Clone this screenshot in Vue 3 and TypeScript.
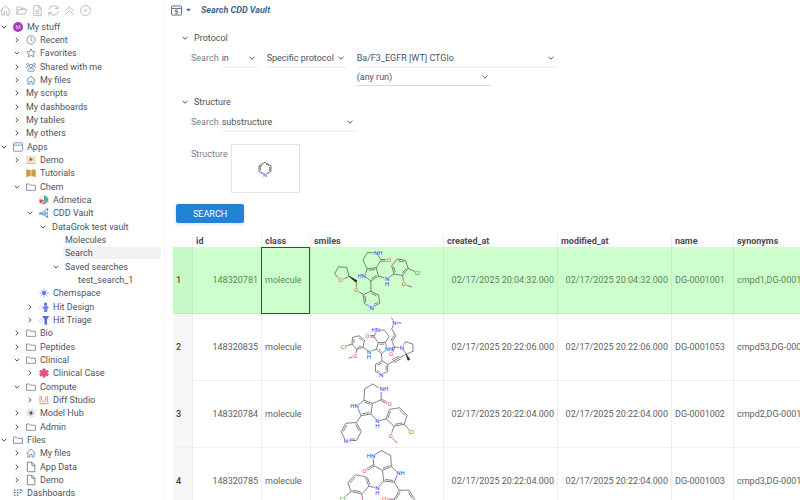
<script setup lang="ts">
import { ref } from 'vue'

type IconName =
  | 'avatar' | 'clock' | 'star' | 'people' | 'home' | 'window' | 'demo' | 'book' | 'folder'
  | 'admetica' | 'vault' | 'space' | 'design' | 'triage' | 'clinical' | 'diff' | 'hub' | 'file' | 'dashboards'

interface TreeNode {
  label: string
  level: number
  icon?: IconName
  state?: 'open' | 'closed'
}

const tree: TreeNode[] = [
  { label: 'My stuff', level: 0, icon: 'avatar', state: 'open' },
  { label: 'Recent', level: 1, icon: 'clock', state: 'closed' },
  { label: 'Favorites', level: 1, icon: 'star', state: 'open' },
  { label: 'Shared with me', level: 1, icon: 'people', state: 'closed' },
  { label: 'My files', level: 1, icon: 'home', state: 'closed' },
  { label: 'My scripts', level: 1, state: 'closed' },
  { label: 'My dashboards', level: 1, state: 'closed' },
  { label: 'My tables', level: 1, state: 'closed' },
  { label: 'My others', level: 1, state: 'closed' },
  { label: 'Apps', level: 0, icon: 'window', state: 'open' },
  { label: 'Demo', level: 1, icon: 'demo', state: 'closed' },
  { label: 'Tutorials', level: 1, icon: 'book' },
  { label: 'Chem', level: 1, icon: 'folder', state: 'open' },
  { label: 'Admetica', level: 2, icon: 'admetica' },
  { label: 'CDD Vault', level: 2, icon: 'vault', state: 'open' },
  { label: 'DataGrok test vault', level: 3, state: 'open' },
  { label: 'Molecules', level: 4 },
  { label: 'Search', level: 4 },
  { label: 'Saved searches', level: 4, state: 'open' },
  { label: 'test_search_1', level: 5 },
  { label: 'Chemspace', level: 2, icon: 'space' },
  { label: 'Hit Design', level: 2, icon: 'design', state: 'closed' },
  { label: 'Hit Triage', level: 2, icon: 'triage', state: 'closed' },
  { label: 'Bio', level: 1, icon: 'folder', state: 'closed' },
  { label: 'Peptides', level: 1, icon: 'folder', state: 'closed' },
  { label: 'Clinical', level: 1, icon: 'folder', state: 'open' },
  { label: 'Clinical Case', level: 2, icon: 'clinical', state: 'closed' },
  { label: 'Compute', level: 1, icon: 'folder', state: 'open' },
  { label: 'Diff Studio', level: 2, icon: 'diff', state: 'closed' },
  { label: 'Model Hub', level: 1, icon: 'hub', state: 'closed' },
  { label: 'Admin', level: 1, icon: 'folder', state: 'closed' },
  { label: 'Files', level: 0, icon: 'folder', state: 'open' },
  { label: 'My files', level: 1, icon: 'home', state: 'closed' },
  { label: 'App Data', level: 1, icon: 'file', state: 'closed' },
  { label: 'Demo', level: 1, icon: 'file', state: 'closed' },
  { label: 'Dashboards', level: 0, icon: 'dashboards' },
]

const selected = ref('Search')
const operator = ref('in')
const scope = ref('Specific protocol')
const protocol = ref('Ba/F3_EGFR [WT] CTGlo')
const run = ref('(any run)')
const mode = ref('substructure')

// Atom: x, y, optional element label, optional label offset along x, optional hydrogen below.
type Atom = [number, number, string?, number?, boolean?]
// Bond: from, to, kind (1, 2, 3 = order; -2 = double on the other side; 5 = centred double; 9 = wedge).
type Bond = [number, number, number]
interface Molecule { atoms: Atom[]; bonds: Bond[] }

const molecules: Molecule[] = [
  {
    atoms: [
      [89, 101, 'O'], [71, 81], [83, 60], [108, 62], [115, 89], [137, 104], [137, 131, 'O'],
      [158, 144], [181, 134], [204, 145], [208, 170], [183, 184, 'N'], [161, 171],
      [181, 103], [161, 88, 'HN', -8], [170, 66], [197, 63], [204, 88],
      [157, 40], [170, 17], [198, 18, 'NH', 5], [212, 40], [236, 40, 'O'],
      [230, 96, 'N', 0, true],
      [251, 82], [244, 57], [261, 36], [286, 41], [294, 65], [277, 86],
      [322, 78, 'Cl'], [281, 113, 'O'], [305, 121],
    ],
    bonds: [
      [0, 1, 1], [1, 2, 1], [2, 3, 1], [3, 4, 1], [4, 0, 1], [4, 5, 9], [5, 6, 1], [6, 7, 1],
      [7, 8, 1], [8, 9, 2], [9, 10, 1], [10, 11, 2], [11, 12, 1], [12, 7, 2], [8, 13, 1],
      [13, 14, 1], [14, 15, 1], [15, 16, 2], [16, 17, 1], [17, 13, 2],
      [15, 18, 1], [18, 19, 1], [19, 20, 1], [20, 21, 1], [21, 16, 1], [21, 22, 5],
      [17, 23, 1], [23, 24, 1], [24, 25, 2], [25, 26, 1], [26, 27, 2], [27, 28, 1], [28, 29, 2], [29, 24, 1],
      [28, 30, 1], [29, 31, 1], [31, 32, 1],
    ],
  },
  {
    atoms: [
      [98, 99, 'Cl'], [124, 91], [125, 71], [145, 66], [162, 79], [157, 101], [138, 107],
      [134, 127, 'O'], [113, 134], [175, 114, 'N', 0, true],
      [198, 107], [203, 87], [225, 86], [230, 107, 'NH', 6], [213, 120],
      [190, 68], [170, 68, 'O'], [201, 49, 'HN', -5], [222, 49], [236, 68],
      [215, 142], [195, 153], [195, 174], [212, 184, 'N'], [232, 174], [232, 153],
      [247, 144], [270, 131], [288, 122], [296, 139], [275, 102, 'N'], [286, 84], [308, 91], [309, 113],
      [252, 100], [243, 121, 'O'], [244, 80], [255, 63], [244, 45], [252, 27, 'N'], [243, 11], [274, 27],
    ],
    bonds: [
      [0, 1, 1], [1, 2, 2], [2, 3, 1], [3, 4, 2], [4, 5, 1], [5, 6, 2], [6, 1, 1], [6, 7, 1], [7, 8, 1],
      [5, 9, 1], [9, 10, 1], [10, 11, 1], [11, 12, 2], [12, 13, 1], [13, 14, 1], [14, 10, 2],
      [11, 15, 1], [15, 16, 5], [15, 17, 1], [17, 18, 1], [18, 19, 1], [19, 12, 1],
      [14, 20, 1], [20, 21, -2], [21, 22, 1], [22, 23, -2], [23, 24, 1], [24, 25, -2], [25, 20, 1],
      [25, 26, 1], [26, 27, 3], [27, 28, 1], [28, 29, 9], [28, 30, 1], [30, 31, 1], [31, 32, 1], [32, 33, 1], [33, 28, 1],
      [30, 34, 1], [34, 35, 5], [34, 36, 1], [36, 37, 5], [37, 38, 1], [38, 39, 1], [39, 40, 1], [39, 41, 1],
    ],
  },
  {
    atoms: [
      [160, 58], [162, 24], [187, 9], [212, 25, 'NH', 9], [212, 57], [186, 68], [238, 70, 'O'],
      [139, 76, 'HN', -8], [151, 105], [181, 100], [201, 122, 'N', 0, true],
      [227, 115], [237, 86], [268, 81], [291, 104], [282, 131], [251, 137],
      [303, 155, 'Cl'], [241, 167, 'O'], [261, 188],
      [137, 126], [152, 153], [137, 180], [105, 182, 'N'], [91, 154], [105, 128],
    ],
    bonds: [
      [0, 1, 1], [1, 2, 1], [2, 3, 1], [3, 4, 1], [4, 5, 1], [4, 6, 5], [5, 0, -2],
      [0, 7, 1], [7, 8, 1], [8, 9, -2], [9, 5, 1], [9, 10, 1], [10, 11, 1],
      [11, 12, 2], [12, 13, 1], [13, 14, 2], [14, 15, 1], [15, 16, 2], [16, 11, 1],
      [15, 17, 1], [16, 18, 1], [18, 19, 1],
      [8, 20, 1], [20, 21, 2], [21, 22, 1], [22, 23, 2], [23, 24, 1], [24, 25, 2], [25, 20, 1],
    ],
  },
  {
    atoms: [
      [187, 24, 'HN', -6], [213, 8], [241, 23], [243, 56], [216, 68], [190, 53], [162, 70, 'O'],
      [263, 76, 'NH', 8], [252, 104], [220, 100], [201, 121, 'N', 0, true],
      [175, 116], [164, 87], [134, 81], [111, 105], [121, 132], [153, 139],
      [95, 154, 'Cl'], [158, 169, 'O'],
      [267, 128], [297, 128], [313, 154], [298, 181], [268, 181], [252, 155], [221, 154, 'O'],
    ],
    bonds: [
      [0, 1, 1], [1, 2, 1], [2, 3, 1], [3, 4, 2], [4, 5, 1], [5, 0, 1], [5, 6, 5],
      [3, 7, 1], [7, 8, 1], [8, 9, 2], [9, 4, 1], [9, 10, 1], [10, 11, 1],
      [11, 12, 2], [12, 13, 1], [13, 14, -2], [14, 15, 1], [15, 16, -2], [16, 11, 1],
      [15, 17, 1], [16, 18, 1], [8, 19, 1],
      [19, 20, 1], [20, 21, 2], [21, 22, 1], [22, 23, 2], [23, 24, 1], [24, 19, 2], [24, 25, 1],
    ],
  },
]

interface Row {
  id: string; kind: string; created: string; modified: string; name: string; synonyms: string
}

const rows: Row[] = [
  { id: '148320781', kind: 'molecule', created: '02/17/2025 20:04:32.000', modified: '02/17/2025 20:04:32.000', name: 'DG-0001001', synonyms: 'cmpd1,DG-0001001' },
  { id: '148320835', kind: 'molecule', created: '02/17/2025 20:22:06.000', modified: '02/17/2025 20:22:06.000', name: 'DG-0001053', synonyms: 'cmpd53,DG-0001053' },
  { id: '148320784', kind: 'molecule', created: '02/17/2025 20:22:04.000', modified: '02/17/2025 20:22:04.000', name: 'DG-0001002', synonyms: 'cmpd2,DG-0001002' },
  { id: '148320785', kind: 'molecule', created: '02/17/2025 20:22:04.000', modified: '02/17/2025 20:22:04.000', name: 'DG-0001003', synonyms: 'cmpd3,DG-0001003' },
]

function elementColor(label?: string): string {
  if (!label) return '#505050'
  if (label.includes('N')) return '#3340f0'
  if (label === 'O') return '#f03a3a'
  return '#1f9a1f'
}

interface Stroke { d: string; color: string; fill?: boolean }

function strokes(m: Molecule): Stroke[] {
  const out: Stroke[] = []
  for (const [from, to, kind] of m.bonds) {
    const a = m.atoms[from]
    const b = m.atoms[to]
    const length = Math.hypot(b[0] - a[0], b[1] - a[1])
    const ux = (b[0] - a[0]) / length
    const uy = (b[1] - a[1]) / length
    const start = a[2] ? 8 : 0
    const end = b[2] ? 8 : 0
    if (kind === 9) {
      out.push({ d: `M${a[0]} ${a[1]}L${b[0] - uy * 3} ${b[1] + ux * 3}L${b[0] + uy * 3} ${b[1] - ux * 3}Z`, color: '#222', fill: true })
      continue
    }
    const lanes: [number, number][] =
      kind === 1 ? [[0, 0]]
        : kind === 2 ? [[0, 0], [5, 4]]
          : kind === -2 ? [[0, 0], [-5, 4]]
            : kind === 5 ? [[-2, 0], [3, 0]]
              : [[0, 0], [-5, 1], [5, 1]]
    for (const [side, trim] of lanes) {
      const at = (t: number) => `${(a[0] + ux * t - uy * side).toFixed(1)} ${(a[1] + uy * t + ux * side).toFixed(1)}`
      const first = start + trim
      const last = length - end - trim
      const middle = length / 2
      out.push({ d: `M${at(first)}L${at(middle)}`, color: elementColor(a[2]) })
      out.push({ d: `M${at(middle)}L${at(last)}`, color: elementColor(b[2]) })
    }
  }
  return out
}

const drawings = molecules.map((m) => ({
  strokes: strokes(m),
  labels: m.atoms
    .filter((a) => a[2])
    .map((a) => ({ x: a[0] + (a[3] ?? 0), y: a[1] + 6, text: a[2], color: elementColor(a[2]), hydrogen: a[4] === true })),
}))
</script>

<template>
  <div class="app">
    <aside class="sidebar">
      <div class="toolbar">
        <button type="button" aria-label="Home">
          <svg viewBox="0 0 12 12"><path d="M.5 6 6 1l5.500 5M2 5v6h2.700V7.500h2.600V11H10V5" /></svg>
        </button>
        <button type="button" aria-label="Open">
          <svg viewBox="0 0 12 12"><path d="M1 10V2h3l1 1.500h4.500V5M1 10l2-5h8.700L9.500 10z" /></svg>
        </button>
        <button type="button" aria-label="Text file">
          <svg viewBox="0 0 12 12"><path d="M2 .7h5.500L10 3.200v8.100H2zM7.300.7v2.700H10M4 5.500h4M4 7.300h4M4 9.100h4" /></svg>
        </button>
        <button type="button" aria-label="Refresh">
          <svg viewBox="0 0 12 12"><path d="M.8 5.400A5.200 5.200 0 0 1 10.600 3.600M11 .6v3.200H7.700M11.200 6.600A5.200 5.200 0 0 1 1.400 8.400M1 11.400V8.200h3.300" /></svg>
        </button>
        <button type="button" aria-label="Collapse all">
          <svg viewBox="0 0 12 12"><path d="m1.500 6.200 4.500-4 4.500 4M1.500 10.200l4.500-4 4.500 4" /></svg>
        </button>
        <button type="button" aria-label="Locate">
          <svg viewBox="0 0 12 12"><circle cx="6" cy="6" r="5.400" /><circle cx="6" cy="6" r="1.200" /></svg>
        </button>
      </div>

      <ul class="tree">
        <li v-for="(node, i) in tree" :key="i" :style="{ paddingLeft: node.level * 13 + 'px' }">
          <span class="chevron">
            <svg v-if="node.state" viewBox="0 0 8 8" :class="{ closed: node.state === 'closed' }"><path d="m1.700 2.800 2.300 2.300 2.300-2.300" /></svg>
          </span>
          <span v-if="node.icon" class="icon">
            <svg v-if="node.icon === 'avatar'" viewBox="0 0 12 12"><circle cx="6" cy="6" r="6" fill="#a93bb8" /><text x="6" y="8.500" fill="#f0d5f3">M</text></svg>
            <svg v-else-if="node.icon === 'clock'" viewBox="0 0 12 12"><circle cx="6" cy="6" r="5" /><path d="M6 2.700V6l2 1.600" /></svg>
            <svg v-else-if="node.icon === 'star'" viewBox="0 0 12 12"><path d="m6 1 1.500 3.300 3.600.4-2.700 2.400.8 3.600L6 8.900l-3.200 1.800.8-3.600L.9 4.700l3.600-.4z" /></svg>
            <svg v-else-if="node.icon === 'people'" viewBox="0 0 12 12"><circle cx="6" cy="4.700" r="1.900" /><circle cx="2" cy="3" r="1.300" /><circle cx="10" cy="3" r="1.300" /><path d="M2.500 11V9.200Q2.700 7.500 4.400 7.500h3.200q1.700 0 1.900 1.700V11zM.2 7.200Q.2 5.500 2.800 5.500M11.800 7.200q0-1.700-2.600-1.700" /></svg>
            <svg v-else-if="node.icon === 'home'" viewBox="0 0 12 12"><path d="M.7 6.200 6 1.400l5.300 4.800M2.200 5.200V11h2.500V7.600h2.600V11h2.500V5.200" /></svg>
            <svg v-else-if="node.icon === 'window'" viewBox="0 0 12 12"><rect x=".6" y="1" width="10.800" height="10" rx="1" /><path d="M.6 3.800h10.800" /></svg>
            <svg v-else-if="node.icon === 'demo'" viewBox="0 0 12 12"><rect x=".3" y="1" width="11.400" height="8" fill="#efe0bd" /><path d="M.3 10h11.400" stroke="#cfa75a" /><path d="m4.500 3 3.700 2.300-3.700 2.300z" fill="#8a5d21" /></svg>
            <svg v-else-if="node.icon === 'book'" viewBox="0 0 12 12"><path d="M.3 2.500h1.300V1.500L5.600 2.500v7.800L3.500 9.800.3 10.800zM11.700 2.500h-1.300V1.500L6.400 2.500v7.800l2.100-.5 3.200 1z" fill="#cc9a3f" /></svg>
            <svg v-else-if="node.icon === 'folder'" viewBox="0 0 12 12"><path d="M.7 10V2.400h3.600l1.200 1.500h5.800V10z" stroke="#77808f" /></svg>
            <svg v-else-if="node.icon === 'admetica'" viewBox="0 0 12 12"><circle cx="6" cy="6" r="5.600" fill="#e6f1f3" stroke="#c5d5d8" stroke-width=".6" /><path d="M6 6V1a5 5 0 0 1 5 5z" fill="#46b582" /><path d="M6 6h5a5 5 0 0 1-3 4.600z" fill="#69a5c8" /><path d="M6 6 2 10.500A6 6 0 0 1 .6 5z" fill="#dd4f56" /><path d="m6 6 1.500 4.800H4z" fill="#e56d72" /></svg>
            <svg v-else-if="node.icon === 'vault'" viewBox="0 0 12 12"><g stroke="#4d86c6" stroke-width=".8"><path d="M.8 6.500 10 1.200v9.600zM3.500 6.500l4.400-2.300v4.600zM.8 6.500H10" /></g><circle cx="10" cy="1.500" r="1.200" fill="#4d86c6" /><circle cx="10" cy="10.500" r="1.200" fill="#4d86c6" /><circle cx="1.200" cy="6.500" r="1.200" fill="#4d86c6" /></svg>
            <svg v-else-if="node.icon === 'space'" viewBox="0 0 12 12"><g stroke="#8fa0e4"><path d="M6 .5v11M.5 6h11M2.100 2.100l7.800 7.800M9.900 2.100 2.100 9.900" /></g><circle cx="6" cy="6" r="2.300" fill="#6075d6" /></svg>
            <svg v-else-if="node.icon === 'design'" viewBox="0 0 12 12"><circle cx="2.500" cy="7" r="2" stroke="#d4d8f2" /><circle cx="8" cy="2.500" r="2" fill="#5d6fd3" /><path d="M8 3.500 12 6.500 10 8.500v3.500h-4V8.500l-2-2z" fill="#7483dd" /></svg>
            <svg v-else-if="node.icon === 'triage'" viewBox="0 0 12 12"><circle cx="2.500" cy="7" r="2" stroke="#d4d8f2" /><path d="M3.700 1.200H12.300L9.700 5.500v6.300H6.500V5.500z" fill="#5d6fd3" /></svg>
            <svg v-else-if="node.icon === 'clinical'" viewBox="0 0 12 12"><path d="M4.200.6h3.600v2.600L10.300 2l1.600 2.800L9.600 6l2.300 1.300-1.600 2.800-2.500-1.200v2.600H4.200V8.900L1.700 10.100.1 7.300 2.400 6 .1 4.800 1.700 2l2.500 1.200z" fill="#dd5282" /></svg>
            <svg v-else-if="node.icon === 'diff'" viewBox="0 0 12 12"><g stroke="#e3777d"><path d="M1.200.8v9.700h10.300M3 1.500q0 6.500 2.500 7.500M10 1v8M8.200 2.200q0 5.800-2.700 6.800" /></g></svg>
            <svg v-else-if="node.icon === 'hub'" viewBox="0 0 12 12"><circle cx="6" cy="6" r="2" fill="#555" /><circle cx="6" cy="6" r="3.200" stroke="#aaa" stroke-width=".6" /><circle cx="6" cy="6" r="4.900" stroke="#8a8a8a" stroke-dasharray="1.400 2.450" /></svg>
            <svg v-else-if="node.icon === 'file'" viewBox="0 0 12 12"><path d="M1.600 .3h5.700l3.300 3.300v8.100h-9zM7 .3V4h3.600" stroke="#6c7078" /></svg>
            <svg v-else viewBox="0 0 12 12"><path d="M1 2.500h2M4.500 2.500h2M8 2.500h3M1 5.500h2M4.500 5.500h2M8 5.500h2M1 8.500h2M4.500 8.500h2" stroke="#4f6f95" stroke-width="1.700" /></svg>
          </span>
          <a href="#" :class="{ selected: node.label === selected }" @click.prevent="selected = node.label">{{ node.label }}</a>
        </li>
      </ul>
    </aside>

    <main class="main">
      <header class="view-header">
        <button type="button" class="view-menu" aria-label="View menu">
          <svg class="view-icon" viewBox="0 0 12 12"><rect x=".6" y="1" width="10.800" height="10" rx="1" /><path d="M.6 3.700h10.800M7.300 5.500H5v1.600h2v2H4.700" /></svg>
          <svg class="caret" viewBox="0 0 6 4"><path d="M0 .500h6L3 3.800z" /></svg>
        </button>
        <h1>Search CDD Vault</h1>
      </header>

      <form class="form" @submit.prevent>
        <section class="protocol">
          <button type="button" class="section-title"><svg viewBox="0 0 8 8"><path d="m1.500 2.800 2.500 2.400 2.500-2.400" /></svg>Protocol</button>
          <div class="line">
            <label for="operator">Search</label>
            <span class="select operator">
              <select id="operator" v-model="operator"><option>in</option></select>
              <svg viewBox="0 0 8 8"><path d="m1.500 2.800 2.500 2.400 2.500-2.400" /></svg>
            </span>
            <span class="select scope">
              <select v-model="scope" aria-label="Scope"><option>Specific protocol</option></select>
              <svg viewBox="0 0 8 8"><path d="m1.500 2.800 2.500 2.400 2.500-2.400" /></svg>
            </span>
            <div class="stack">
              <span class="select name">
                <select v-model="protocol" aria-label="Protocol name"><option>Ba/F3_EGFR [WT] CTGlo</option></select>
                <svg viewBox="0 0 8 8"><path d="m1.500 2.800 2.500 2.400 2.500-2.400" /></svg>
              </span>
              <span class="select run">
                <select v-model="run" aria-label="Run"><option>(any run)</option></select>
                <svg viewBox="0 0 8 8"><path d="m1.500 2.800 2.500 2.400 2.500-2.400" /></svg>
              </span>
            </div>
          </div>
        </section>

        <section class="structure">
          <button type="button" class="section-title"><svg viewBox="0 0 8 8"><path d="m1.500 2.800 2.500 2.400 2.500-2.400" /></svg>Structure</button>
          <div class="line">
            <label for="mode">Search</label>
            <span class="select mode">
              <select id="mode" v-model="mode"><option>substructure</option></select>
              <svg viewBox="0 0 8 8"><path d="m1.500 2.800 2.500 2.400 2.500-2.400" /></svg>
            </span>
          </div>
          <div class="line sketch-line">
            <label for="sketch">Structure</label>
            <button id="sketch" type="button" class="sketch">
              <svg viewBox="0 0 42 48">
                <path d="M15 38 3 31V14L21 4l18 10v17l-12 7M7 28V17l6-4M24 9l8 4.500M35 17v13" />
                <path d="M15 38l-5-3M27 38l5-3" stroke="#5a5af0" />
                <text x="21" y="47">N</text>
              </svg>
            </button>
          </div>
        </section>

        <button type="submit" class="submit">SEARCH</button>
      </form>

      <table class="grid">
        <colgroup>
          <col class="c-num"><col class="c-id"><col class="c-class"><col class="c-smiles">
          <col class="c-date"><col class="c-date"><col class="c-name"><col>
        </colgroup>
        <thead>
          <tr>
            <th></th><th>id</th><th>class</th><th>smiles</th><th>created_at</th><th>modified_at</th><th>name</th><th>synonyms</th>
          </tr>
        </thead>
        <tbody>
          <tr v-for="(row, i) in rows" :key="row.id" :class="{ active: i === 0 }">
            <th scope="row">{{ i + 1 }}</th>
            <td class="right">{{ row.id }}</td>
            <td :class="{ current: i === 0 }">{{ row.kind }}</td>
            <td class="drawing">
              <svg viewBox="0 0 399 200">
                <path v-for="(s, k) in drawings[i].strokes" :key="k" :d="s.d" :stroke="s.color" :fill="s.fill ? s.color : 'none'" />
                <template v-for="(l, k) in drawings[i].labels" :key="'l' + k">
                  <text :x="l.x" :y="l.y" :fill="l.color">{{ l.text }}</text>
                  <text v-if="l.hydrogen" :x="l.x" :y="l.y + 15" :fill="l.color">H</text>
                </template>
              </svg>
            </td>
            <td class="right">{{ row.created }}</td>
            <td class="right">{{ row.modified }}</td>
            <td>{{ row.name }}</td>
            <td>{{ row.synonyms }}</td>
          </tr>
        </tbody>
      </table>
    </main>
  </div>
</template>

<style>
body {
  margin: 0;
  background: #fff;
}
</style>

<style scoped>
.app {
  display: flex;
  height: 100vh;
  overflow: hidden;
  font-family: Roboto, "Liberation Sans", sans-serif;
  font-size: 9px;
  line-height: 12px;
  color: #4d5261;
}

button,
select {
  margin: 0;
  padding: 0;
  border: 0;
  background: none;
  font: inherit;
  color: inherit;
}

svg {
  display: block;
  fill: none;
  stroke: currentColor;
  overflow: visible;
}

.sidebar {
  display: flex;
  flex-direction: column;
  flex: 0 0 165px;
  box-sizing: border-box;
  border-right: 1px solid #f6f6f8;
}

.toolbar {
  display: flex;
  align-items: center;
  gap: 5px;
  height: 20px;
  color: #b3b8bb;
}

.toolbar svg {
  width: 11px;
  height: 11px;
}

.tree {
  flex: 1;
  display: grid;
  grid-auto-rows: minmax(13px, 1fr);
  margin: 0;
  padding: 0 3px 0 0;
  list-style: none;
}

.tree li {
  display: flex;
  align-items: center;
}

.chevron {
  flex: 0 0 8px;
  margin-right: 5px;
}

.chevron svg {
  width: 8px;
  height: 8px;
}

.chevron .closed {
  transform: rotate(-90deg);
}

.icon {
  flex: 0 0 10px;
  margin-right: 4px;
  color: #6585a6;
}

.icon svg {
  width: 10px;
  height: 10px;
}

.icon svg [fill]:not([stroke]) {
  stroke: none;
}

.icon text {
  font-size: 7px;
  text-anchor: middle;
}

.tree a {
  flex: 1;
  margin-left: -2px;
  padding-left: 2px;
  color: inherit;
  text-decoration: none;
  white-space: nowrap;
}

.tree a.selected {
  background: #f1f1f3;
}

.main {
  flex: 1;
  min-width: 0;
  padding-left: 8px;
  overflow: hidden;
}

.view-header {
  display: flex;
  align-items: center;
  gap: 10px;
  height: 20px;
  margin-left: -2px;
  color: #41658c;
}

.view-menu {
  display: flex;
  align-items: center;
  gap: 4px;
}

.view-icon {
  width: 11px;
  height: 11px;
}

.caret {
  width: 5px;
  height: 4px;
  fill: currentColor;
  stroke: none;
}

h1 {
  margin: 0;
  font-size: 9px;
  font-style: italic;
  font-weight: 700;
}

.form {
  padding: 12px 0 0 3px;
}

.section-title {
  display: flex;
  align-items: center;
  gap: 5px;
  margin-left: 5px;
}

.section-title svg,
.select svg {
  width: 8px;
  height: 8px;
}

.line {
  display: flex;
  align-items: flex-start;
  padding: 6px 0 0 15px;
}

.line label {
  margin-right: 3px;
  padding-top: 2px;
  color: #797d88;
}

.select {
  display: grid;
  align-items: center;
  box-sizing: border-box;
  height: 18px;
  border-bottom: 2px solid #f4f4f5;
}

.select select,
.select svg {
  grid-area: 1 / 1;
}

.select select {
  width: 100%;
  height: 16px;
  appearance: none;
  outline: none;
}

.select svg {
  justify-self: end;
  margin-right: 2px;
  pointer-events: none;
}

.operator {
  width: 36px;
  margin-right: 9px;
}

.scope {
  width: 80px;
  margin-right: 10px;
}

.name {
  width: 200px;
}

.run {
  width: 134px;
  border-bottom: 1px solid #dcdde0;
}

.structure {
  margin-top: 10px;
}

.mode {
  width: 134px;
}

.structure .sketch-line {
  padding-top: 12px;
}

.sketch-line label {
  padding-top: 4px;
}

.sketch {
  display: grid;
  place-items: center;
  box-sizing: border-box;
  width: 69px;
  height: 49px;
  border: 1px solid #e4e4e6;
}

.sketch svg {
  width: 14px;
  height: 16px;
  stroke: #555;
  stroke-width: 2.5;
}

.sketch text {
  fill: #4444f0;
  stroke: none;
  font-size: 16px;
  text-anchor: middle;
}

.submit {
  height: 19px;
  margin-top: 11px;
  padding: 0 17px;
  border-radius: 2px;
  background: #2083d5;
  box-shadow: 0 1px 4px rgb(0 0 0 / 15%);
  color: #fff;
}

.grid {
  width: 100%;
  margin-top: 11px;
  border-spacing: 0;
  table-layout: fixed;
  color: #5f6063;
}

.c-num { width: 19px; }
.c-id { width: 69px; }
.c-class { width: 49px; }
.c-smiles { width: 133px; }
.c-date { width: 114px; }
.c-name { width: 62px; }

.grid th,
.grid td {
  box-sizing: border-box;
  padding: 0 3px;
  overflow: hidden;
  text-align: left;
  white-space: nowrap;
  border-left: 1px solid #ededee;
}

.grid thead th {
  height: 13px;
  color: #4c4c4f;
  font-weight: 700;
}

.grid tbody th,
.grid tbody td {
  height: 67px;
  border-bottom: 1px solid #f1f1f2;
}

.grid th:first-child {
  border-left: 0;
}

.grid tbody th {
  background: #f6f6f6;
  color: #3d3d40;
  font-weight: 500;
}

.grid .right {
  text-align: right;
}

.grid tr.active th,
.grid tr.active td {
  background: #ccffcc;
  border-color: #bdf2c0;
  color: #5b865d;
}

.grid tbody tr.active th {
  background: #c7f9c7;
  color: #31633a;
}

.grid tbody td.current {
  outline: 1px solid #2a572d;
  outline-offset: -1px;
}

.grid td.drawing {
  padding: 0;
}

.drawing svg {
  width: 132px;
  height: 66px;
  stroke-width: 2.2;
  overflow: hidden;
}

.drawing text {
  stroke: none;
  font-size: 18px;
  text-anchor: middle;
}
</style>
